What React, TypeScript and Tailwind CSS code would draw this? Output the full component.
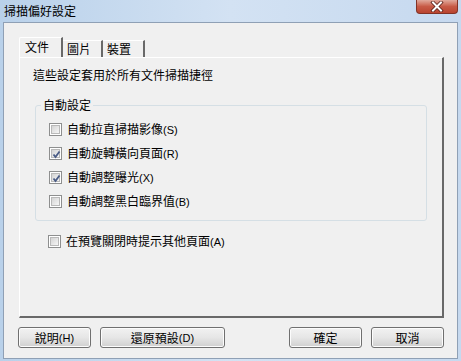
const cjk = { fontFamily: '"Noto Sans CJK TC", "Noto Sans CJK SC", sans-serif' };

const Mn = ({ k }: { k: string }) => (
  <span className="font-['Liberation_Sans',sans-serif] text-[11px]">({k})</span>
);

const CheckBox = ({ checked }: { checked?: boolean }) => (
  <span className="relative w-[13px] h-[13px] border border-[#8e8f8f] bg-white p-[1px] shrink-0">
    <span className="block w-full h-full bg-gradient-to-br from-[#d4d4d4] to-[#f6f6f6] border border-[#b9b9b9]" />
    {checked && (
      <svg className="absolute left-[1px] top-[1px]" width="11" height="11" viewBox="0 0 11 11">
        <path d="M2.5 5.5 L4.5 8 L8.5 2.5" fill="none" stroke="#4a5c86" strokeWidth="1.8" />
      </svg>
    )}
  </span>
);

const Row = ({ label, k, checked }: { label: string; k: string; checked?: boolean }) => (
  <div className="h-[24px] flex items-center pl-[13px] gap-[5px]">
    <CheckBox checked={checked} />
    <span className="text-[12px] leading-[16px] text-black">
      {label}
      <Mn k={k} />
    </span>
  </div>
);

const Btn = ({ w, children }: { w: string; children: React.ReactNode }) => (
  <button
    className={`${w} h-[21px] rounded-[3px] border border-[#707070] bg-gradient-to-b from-[#f2f2f2] via-[#e6e6e6] to-[#d0d0d0] text-[12px] leading-[16px] text-black flex items-center justify-center shadow-[inset_0_0_0_1px_#fcfcfc]`}
  >
    {children}
  </button>
);

export default function App() {
  return (
    <div
      className="w-[461px] h-[361px] relative flex flex-col bg-gradient-to-r from-[#b9d1ea] via-[#d3e2f3] to-[#c6d9ef] overflow-hidden"
      style={cjk}
    >
      <div className="h-[22px] flex items-center pl-[4px] text-[12px] text-black">掃描偏好設定</div>
      <div className="absolute right-[3px] top-0 w-[42px] h-[14px] rounded-b-[4px] border border-t-0 border-[#823326] bg-gradient-to-b from-[#e0a99c] via-[#c75a46] to-[#b9442f] flex items-center justify-center">
        <svg width="14" height="11" viewBox="0 0 14 11">
          <path d="M3 1.5 L11 9.5 M11 1.5 L3 9.5" stroke="#5a2018" strokeWidth="3.6" strokeLinecap="square" />
          <path d="M3 1.5 L11 9.5 M11 1.5 L3 9.5" stroke="#ffffff" strokeWidth="2" strokeLinecap="square" />
        </svg>
      </div>

      <div className="mx-[3px] mb-[2px] flex-1 bg-[#f0f0f0] border border-[#8fa0b5] pt-[14px] pl-[15px] flex flex-col">
        <div className="flex items-end h-[20px] text-[12px] leading-[16px]">
          <div className="relative z-10 w-[44px] h-[20px] bg-[#f0f0f0] border-l border-t border-white border-r-2 border-r-[#696969] rounded-tl-[2px] pl-[5px] pt-[1px]">
            文件
          </div>
          <div className="w-[40px] h-[17px] border-t border-white border-r-2 border-r-[#696969] pl-[4px]">圖片</div>
          <div className="w-[42px] h-[17px] border-t border-white border-r-2 border-r-[#696969] pl-[4px]">裝置</div>
        </div>

        <div className="w-[425px] h-[261px] border-l border-t border-white border-r-2 border-b-2 border-r-[#696969] border-b-[#696969] flex flex-col">
          <div className="pl-[13px] pt-[9px] text-[12px] leading-[16px]">這些設定套用於所有文件掃描捷徑</div>
          <fieldset className="ml-[15px] mt-[14px] w-[392px] border border-[#d5dfe5] rounded-[3px] pt-[4px] pb-[7px]">
            <legend className="ml-[5px] px-[2px] text-[12px] leading-[16px]">自動設定</legend>
            <Row label="自動拉直掃描影像" k="S" />
            <Row label="自動旋轉橫向頁面" k="R" checked />
            <Row label="自動調整曝光" k="X" checked />
            <Row label="自動調整黑白臨界值" k="B" />
          </fieldset>
          <div className="ml-[15px] mt-[8px]">
            <Row label="在預覽關閉時提示其他頁面" k="A" />
          </div>
        </div>

        <div className="flex mt-[9px] w-[425px]">
          <Btn w="w-[73px] -ml-[1px]">
            說明<Mn k="H" />
          </Btn>
          <Btn w="w-[125px] ml-[9px]">
            還原預設<Mn k="D" />
          </Btn>
          <div className="flex-1" />
          <Btn w="w-[73px]">確定</Btn>
          <Btn w="w-[73px] ml-[9px]">取消</Btn>
        </div>
      </div>
    </div>
  );
}
